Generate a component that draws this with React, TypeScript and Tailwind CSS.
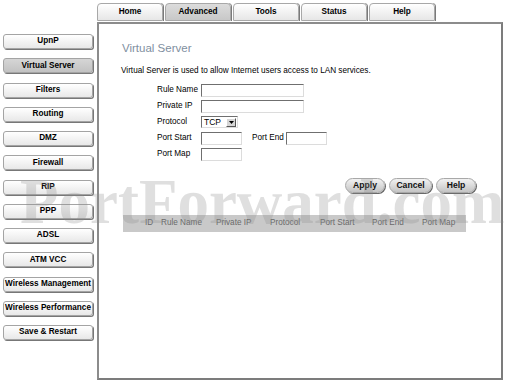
const sideItems = [
  "UpnP",
  "Virtual Server",
  "Filters",
  "Routing",
  "DMZ",
  "Firewall",
  "RIP",
  "PPP",
  "ADSL",
  "ATM VCC",
  "Wireless Management",
  "Wireless Performance",
  "Save & Restart",
];

const tabs = ["Home", "Advanced", "Tools", "Status", "Help"];

const cols = [
  { label: "ID", w: "w-[16px]" },
  { label: "Rule Name", w: "w-[55px]" },
  { label: "Private IP", w: "w-[54px]" },
  { label: "Protocol", w: "w-[50px]" },
  { label: "Port Start", w: "w-[52px]" },
  { label: "Port End", w: "w-[50px]" },
  { label: "Port Map", w: "w-[44px]" },
];

const inputCls =
  "h-[13px] bg-white border border-t-[#6f6f6f] border-l-[#6f6f6f] border-r-[#dcdcdc] border-b-[#dcdcdc]";

const App = () => {
  return (
    <div className="relative w-[510px] h-[382px] bg-white overflow-hidden font-['Liberation_Sans',Arial,sans-serif] text-black">
      <div className="flex">
        {/* left menu */}
        <aside className="w-[97px] pt-[34px] pl-[3px] flex flex-col gap-[9.25px]">
          {sideItems.map((s) => (
            <div
              key={s}
              className={
                "w-[90px] h-[15px] rounded-[3px] border border-[#a4a4a4] shadow-[1px_1px_0_#777] flex items-center justify-center text-[8.2px] font-bold whitespace-nowrap " +
                (s === "Virtual Server"
                  ? "bg-gradient-to-b from-[#d6d6d6] to-[#c2c2c2]"
                  : "bg-gradient-to-b from-white to-[#e8e8e8]")
              }
            >
              {s}
            </div>
          ))}
        </aside>

        <div className="flex flex-col">
          {/* top tabs */}
          <nav className="flex gap-[2px] pt-[3px] h-[22px]">
            {tabs.map((t) => (
              <div
                key={t}
                className={
                  "w-[66px] h-[18px] rounded-t-[4px] border border-[#a8a8a8] shadow-[1px_0_0_#7a7a7a] flex items-center justify-center text-[8.2px] font-bold " +
                  (t === "Advanced"
                    ? "bg-gradient-to-b from-[#dcdcdc] to-[#c8c8c8]"
                    : "bg-gradient-to-b from-white to-[#e6e6e6]")
                }
              >
                {t}
              </div>
            ))}
          </nav>

          {/* content box */}
          <main className="w-[406px] h-[358px] border-2 border-t-[#8c8c8c] border-l-[#8c8c8c] border-r-[#7c7c7c] border-b-[#7c7c7c] bg-white">
            <h1 className="mt-[17px] pl-[23px] text-[11.5px] leading-[14px] text-[#7f8f9f]">
              Virtual Server
            </h1>
            <p className="mt-[11px] pl-[22px] text-[8.2px] leading-[10px]">
              Virtual Server is used to allow Internet users access to LAN services.
            </p>

            <div className="mt-[6px] pl-[58px] flex flex-col text-[8.2px]">
              <div className="h-[16px] flex items-center">
                <span className="w-[44px]">Rule Name</span>
                <div className={inputCls + " w-[103px]"} />
              </div>
              <div className="h-[16px] flex items-center">
                <span className="w-[44px]">Private IP</span>
                <div className={inputCls + " w-[103px]"} />
              </div>
              <div className="h-[16px] flex items-center">
                <span className="w-[44px]">Protocol</span>
                <div className="w-[37px] h-[12px] bg-white border border-t-[#6f6f6f] border-l-[#6f6f6f] border-r-[#dcdcdc] border-b-[#dcdcdc] flex items-center justify-between pl-[2px] pr-[1px]">
                  <span className="text-[8.5px] leading-[10px]">TCP</span>
                  <div className="w-[10px] h-[9px] bg-[#d6d6d6] border border-t-white border-l-white border-r-[#555] border-b-[#555] flex items-center justify-center">
                    <svg width="5" height="3" viewBox="0 0 5 3">
                      <path d="M0 0h5L2.5 3z" fill="#000" />
                    </svg>
                  </div>
                </div>
              </div>
              <div className="h-[16px] flex items-center">
                <span className="w-[44px]">Port Start</span>
                <div className={inputCls + " w-[41px]"} />
                <span className="ml-[10px] w-[34px]">Port End</span>
                <div className={inputCls + " w-[41px]"} />
              </div>
              <div className="h-[16px] flex items-center">
                <span className="w-[44px]">Port Map</span>
                <div className={inputCls + " w-[41px]"} />
              </div>
            </div>

            <div className="mt-[16px] pr-[25px] flex justify-end gap-[4px]">
              {[
                { t: "Apply", w: "w-[40px]" },
                { t: "Cancel", w: "w-[43px]" },
                { t: "Help", w: "w-[40px]" },
              ].map((b) => (
                <div
                  key={b.t}
                  className={
                    b.w +
                    " h-[15px] rounded-full border border-[#a8a8a8] shadow-[1px_1px_0_#6a6a6a] bg-gradient-to-b from-[#f2f2f2] to-[#c4c4c4] flex items-center justify-center text-[8.6px] font-bold text-[#111]"
                  }
                >
                  {b.t}
                </div>
              ))}
            </div>

            <div className="mt-[22px] ml-[24px] w-[343px] h-[17px] bg-[#c9c9c9] flex items-center pl-[22px] text-[8.2px] text-[#6a6a6a]">
              {cols.map((c) => (
                <span key={c.label} className={c.w + " whitespace-nowrap"}>
                  {c.label}
                </span>
              ))}
            </div>
          </main>
        </div>
      </div>

      {/* watermark */}
      <div className="pointer-events-none absolute left-[20px] top-[162px] text-[63px] leading-[80px] font-bold font-['Liberation_Serif','Times_New_Roman',serif] text-[rgba(140,140,140,0.28)] whitespace-nowrap">
        PortForward.com
      </div>
    </div>
  );
};

export default App;
